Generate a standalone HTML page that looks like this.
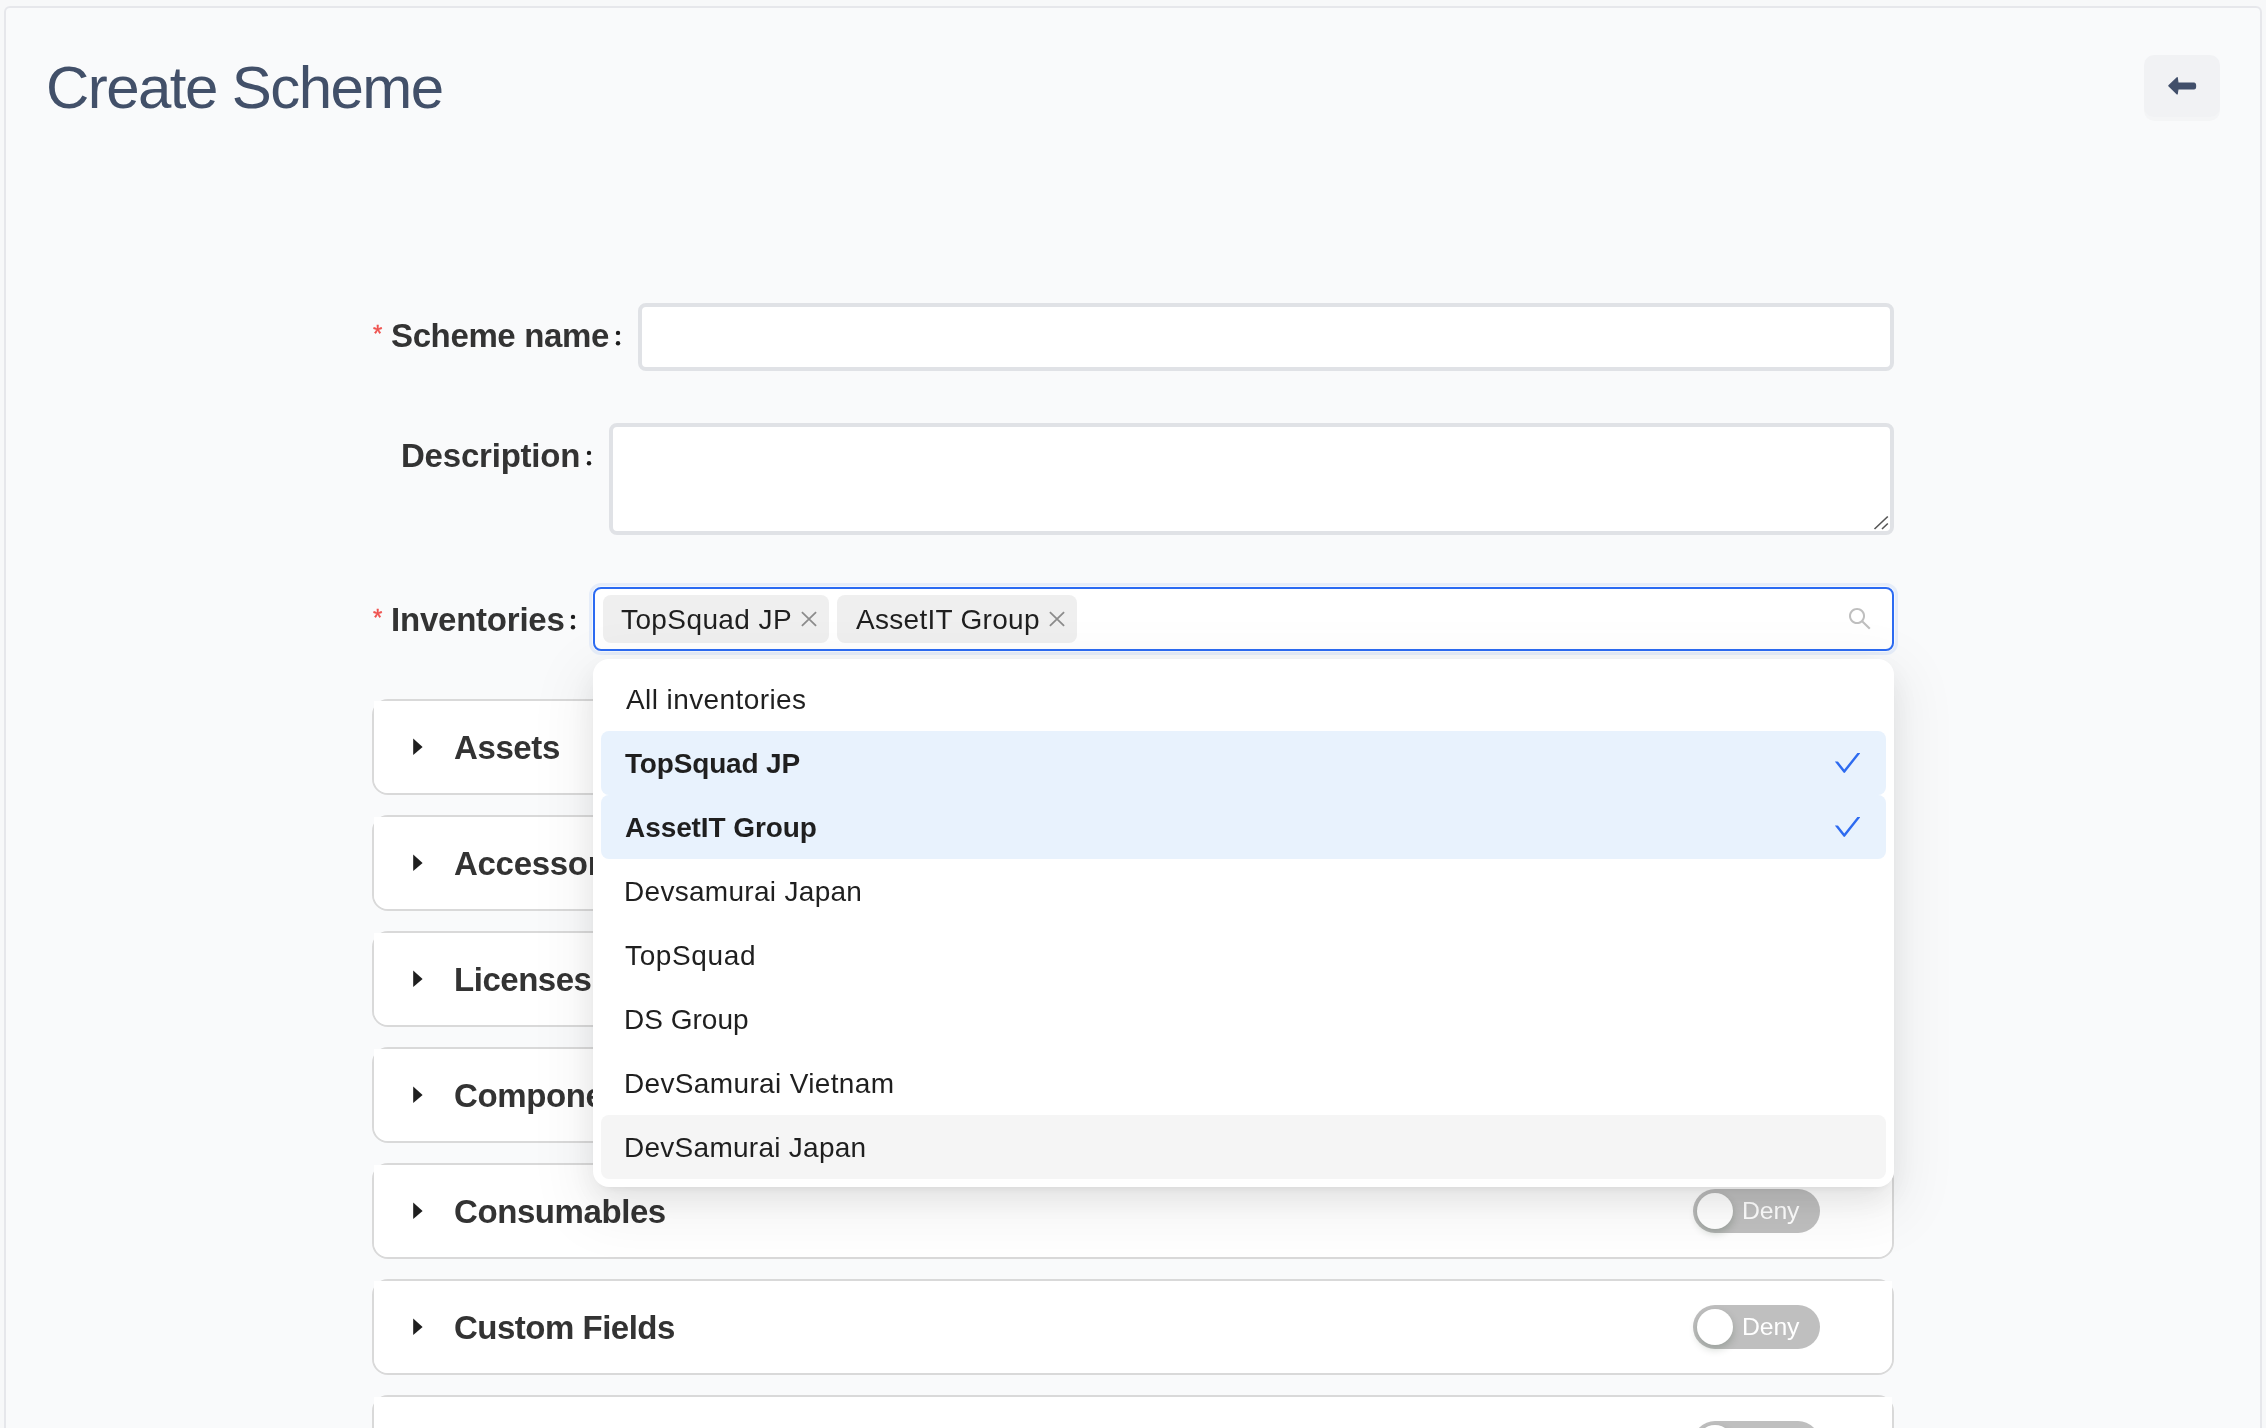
<!DOCTYPE html>
<html><head><meta charset="utf-8">
<style>
*{box-sizing:border-box;margin:0;padding:0}
html,body{width:2266px;height:1428px;overflow:hidden;background:#f7f8f9;font-family:"Liberation Sans",sans-serif}
.a{position:absolute}
.t{position:absolute;white-space:pre;line-height:1;will-change:transform}
#card{left:4px;top:6px;width:2258px;height:1500px;border:2px solid #e6e7eb;border-radius:6px;background:#f9fafb}
.lbl{font-size:33px;font-weight:700;color:#333}
.req{color:#ef5350;font-size:24px;font-weight:400;-webkit-text-stroke:0.4px #ef5350}
.inp{background:#fff;border:4px solid #e0e2e6;border-radius:8px}
.tag{background:#efefef;border-radius:8px;height:48px;top:595px}
.tagt{font-size:28px;color:#1f1f1f;margin-top:1px}
.opt{left:601px;width:1285px;height:64px;border-radius:8px}
.optt{font-size:28px;color:#1f1f1f}
.sel{background:#e8f2fd}
.pnl{left:372px;width:1522px;height:96px;border:2px solid #d9d9d9;border-radius:16px}
.pnl .hd{position:absolute;left:0;top:0;right:0;bottom:0;background:#fff;border-radius:0 0 14px 14px}
.pt{font-size:33px;font-weight:700;color:#333;left:80px}
.caret{position:absolute;left:38px;top:36px}
.sw{position:absolute;left:1319px;top:24px;width:127px;height:44px;border-radius:22px;background:#bfbfbf}
.sw .h{position:absolute;left:4px;top:4px;width:36px;height:36px;border-radius:50%;background:#fff;box-shadow:0 4px 8px rgba(0,35,11,0.2)}
.sw .d{position:absolute;left:49.3px;top:10px;letter-spacing:-0.13px;font-size:24.8px;will-change:transform;color:#fff;white-space:pre;line-height:1}
</style></head><body>
<div id="card" class="a"></div>
<div class="t" style="left:45.7px;top:58px;font-size:60px;color:#425069;letter-spacing:-1.56px">Create Scheme</div>
<!-- back button -->
<div class="a" style="left:2144px;top:55px;width:76px;height:62px;border-radius:10px;background:#f1f2f4;box-shadow:0 4px 0 rgba(0,0,0,0.02)"></div>
<svg class="a" style="left:2160px;top:70px" width="44" height="30" viewBox="2160 70 44 30">
<path d="M2168.8 85.8 L2177.2 77.6 L2178 83 L2194 83 Q2195.6 83 2195.6 86 Q2195.6 89 2194 89 L2178 89 L2177.2 94 Z" fill="#414f6a" stroke="#414f6a" stroke-width="1.2" stroke-linejoin="round"/>
</svg>

<!-- Scheme name -->
<div class="t req" style="left:372.5px;top:321.5px">*</div>
<div class="t lbl" style="left:391px;top:319px;letter-spacing:-0.37px">Scheme name</div>
<svg class="a" style="left:613.8px;top:326.9px" width="8" height="22" viewBox="0 0 8 22"><circle cx="4" cy="5.90" r="2.2" fill="#1c1c1c"/><circle cx="4" cy="16.20" r="2.2" fill="#1c1c1c"/></svg>
<div class="a inp" style="left:638px;top:303px;width:1256px;height:68px"></div>

<!-- Description -->
<div class="t lbl" style="left:400.9px;top:439px;letter-spacing:-0.21px">Description</div>
<svg class="a" style="left:584.6px;top:446.9px" width="8" height="22" viewBox="0 0 8 22"><circle cx="4" cy="5.90" r="2.2" fill="#1c1c1c"/><circle cx="4" cy="16.20" r="2.2" fill="#1c1c1c"/></svg>
<div class="a inp" style="left:609px;top:423px;width:1285px;height:112px"></div>
<svg class="a" style="left:1870px;top:512px" width="22" height="22" viewBox="1870 512 22 22">
<path d="M1874.5 529 L1887.8 516.5 M1882 529 L1887.8 523.5" stroke="#555" stroke-width="1.6" fill="none"/>
</svg>

<!-- Inventories -->
<div class="t req" style="left:372.5px;top:605.5px">*</div>
<div class="t lbl" style="left:391.2px;top:603px;letter-spacing:-0.22px">Inventories</div>
<svg class="a" style="left:568.9px;top:610.8px" width="8" height="22" viewBox="0 0 8 22"><circle cx="4" cy="5.90" r="2.2" fill="#1c1c1c"/><circle cx="4" cy="16.20" r="2.2" fill="#1c1c1c"/></svg>
<div class="a" style="left:593px;top:587px;width:1301px;height:64px;border:2px solid #2c6bf2;border-radius:8px;background:#fff;box-shadow:0 0 0 1px #f5f8fd,0 0 0 4px #e6edf9"></div>
<div class="a tag" style="left:603px;width:226px"></div>
<div class="t tagt" style="left:621px;top:605px;letter-spacing:0.4px">TopSquad JP</div>
<svg class="a" style="left:800px;top:610px" width="18" height="18" viewBox="0 0 18 18"><path d="M1.9 2.2L16.1 15.8M16.1 2.2L1.9 15.8" stroke="#8c8c8c" stroke-width="1.8"/></svg>
<div class="a tag" style="left:837px;width:240px"></div>
<div class="t tagt" style="left:855.7px;top:605px;letter-spacing:0.29px">AssetIT Group</div>
<svg class="a" style="left:1048px;top:610px" width="18" height="18" viewBox="0 0 18 18"><path d="M1.9 2.2L16.1 15.8M16.1 2.2L1.9 15.8" stroke="#8c8c8c" stroke-width="1.8"/></svg>
<svg class="a" style="left:1849.3px;top:608.3px" width="21.4" height="21.4" viewBox="112 112 800 800"><path fill="#bfbfbf" d="M909.6 854.5L649.9 594.8C690.2 542.7 712 479 712 412c0-80.2-31.3-155.4-87.9-212.1-56.6-56.7-132-87.9-212.1-87.9s-155.5 31.3-212.1 87.9C143.2 256.5 112 331.8 112 412c0 80.1 31.3 155.5 87.9 212.1C256.5 680.8 331.8 712 412 712c67 0 130.6-21.8 182.7-62l259.7 259.6a8.2 8.2 0 0011.6 0l43.6-43.5a8.2 8.2 0 000-11.6zM570.4 570.4C528 612.7 471.8 636 412 636s-116-23.3-158.4-65.6C211.3 528 188 471.8 188 412s23.3-116.1 65.6-158.4C296 211.3 352.2 188 412 188s116.1 23.2 158.4 65.6S636 352.2 636 412s-23.3 116.1-65.6 158.4z"/></svg>

<!-- Panels -->
<div id="panels">
<div class="a pnl" style="top:699px"><div class="hd"></div><svg class="caret" width="12" height="20" viewBox="0 0 12 20"><path d="M1.2 1.6 L10.6 9.9 L1.2 18.0 Z" fill="#1f1f1f"/></svg><div class="t pt" style="top:30px;letter-spacing:-0.4px">Assets</div><div class="sw"><div class="h"></div><div class="d">Deny</div></div></div>
<div class="a pnl" style="top:815px"><div class="hd"></div><svg class="caret" width="12" height="20" viewBox="0 0 12 20"><path d="M1.2 1.6 L10.6 9.9 L1.2 18.0 Z" fill="#1f1f1f"/></svg><div class="t pt" style="top:30px;letter-spacing:-0.3px">Accessories</div><div class="sw"><div class="h"></div><div class="d">Deny</div></div></div>
<div class="a pnl" style="top:931px"><div class="hd"></div><svg class="caret" width="12" height="20" viewBox="0 0 12 20"><path d="M1.2 1.6 L10.6 9.9 L1.2 18.0 Z" fill="#1f1f1f"/></svg><div class="t pt" style="top:30px;letter-spacing:-0.47px">Licenses</div><div class="sw"><div class="h"></div><div class="d">Deny</div></div></div>
<div class="a pnl" style="top:1047px"><div class="hd"></div><svg class="caret" width="12" height="20" viewBox="0 0 12 20"><path d="M1.2 1.6 L10.6 9.9 L1.2 18.0 Z" fill="#1f1f1f"/></svg><div class="t pt" style="top:30px;letter-spacing:-0.4px">Components</div><div class="sw"><div class="h"></div><div class="d">Deny</div></div></div>
<div class="a pnl" style="top:1163px"><div class="hd"></div><svg class="caret" width="12" height="20" viewBox="0 0 12 20"><path d="M1.2 1.6 L10.6 9.9 L1.2 18.0 Z" fill="#1f1f1f"/></svg><div class="t pt" style="top:30px;letter-spacing:-0.42px">Consumables</div><div class="sw"><div class="h"></div><div class="d">Deny</div></div></div>
<div class="a pnl" style="top:1279px"><div class="hd"></div><svg class="caret" width="12" height="20" viewBox="0 0 12 20"><path d="M1.2 1.6 L10.6 9.9 L1.2 18.0 Z" fill="#1f1f1f"/></svg><div class="t pt" style="top:30px;letter-spacing:-0.5px">Custom Fields</div><div class="sw"><div class="h"></div><div class="d">Deny</div></div></div>
<div class="a pnl" style="top:1395px"><div class="hd"></div><svg class="caret" width="12" height="20" viewBox="0 0 12 20"><path d="M1.2 1.6 L10.6 9.9 L1.2 18.0 Z" fill="#1f1f1f"/></svg><div class="t pt" style="top:30px;letter-spacing:-0.4px">Reports</div><div class="sw"><div class="h"></div><div class="d">Deny</div></div></div>
</div>

<!-- Dropdown -->
<div class="a" style="left:593px;top:659px;width:1301px;height:528px;background:#fff;border-radius:16px;box-shadow:0 12px 32px 0 rgba(0,0,0,0.08),0 6px 12px -8px rgba(0,0,0,0.12),0 18px 56px 16px rgba(0,0,0,0.05)"></div>
<div class="t optt" style="left:626.4px;top:686px;font-weight:400;letter-spacing:0.41px">All inventories</div>
<div class="a opt" style="top:731px;background:#e8f2fd"></div>
<div class="t optt" style="left:625.4px;top:750px;font-weight:700;letter-spacing:-0.17px">TopSquad JP</div>
<svg class="a" style="left:1835px;top:752.8px" width="25.1" height="19.9" viewBox="105 190 813 644"><path fill="#2d6bf0" d="M912 190h-69.9c-9.8 0-19.1 4.5-25.1 12.2L404.7 724.5 207 474a32 32 0 00-25.1-12.2H112c-6.7 0-10.4 7.7-6.3 12.9l273.9 347c12.8 16.2 37.4 16.2 50.3 0l488.4-618.9c4.1-5.1.4-12.8-6.3-12.8z"/></svg>
<div class="a opt" style="top:795px;background:#e8f2fd"></div>
<div class="t optt" style="left:625.4px;top:814px;font-weight:700;letter-spacing:-0.08px">AssetIT Group</div>
<svg class="a" style="left:1835px;top:816.8px" width="25.1" height="19.9" viewBox="105 190 813 644"><path fill="#2d6bf0" d="M912 190h-69.9c-9.8 0-19.1 4.5-25.1 12.2L404.7 724.5 207 474a32 32 0 00-25.1-12.2H112c-6.7 0-10.4 7.7-6.3 12.9l273.9 347c12.8 16.2 37.4 16.2 50.3 0l488.4-618.9c4.1-5.1.4-12.8-6.3-12.8z"/></svg>
<div class="t optt" style="left:624.4px;top:878px;font-weight:400;letter-spacing:0.3px">Devsamurai Japan</div>
<div class="t optt" style="left:625.4px;top:942px;font-weight:400;letter-spacing:0.63px">TopSquad</div>
<div class="t optt" style="left:624.4px;top:1006px;font-weight:400;letter-spacing:0.01px">DS Group</div>
<div class="t optt" style="left:624.4px;top:1070px;font-weight:400;letter-spacing:0.35px">DevSamurai Vietnam</div>
<div class="a opt" style="top:1115px;background:#f5f5f5"></div>
<div class="t optt" style="left:624.4px;top:1134px;font-weight:400;letter-spacing:0.27px">DevSamurai Japan</div>
</body></html>
